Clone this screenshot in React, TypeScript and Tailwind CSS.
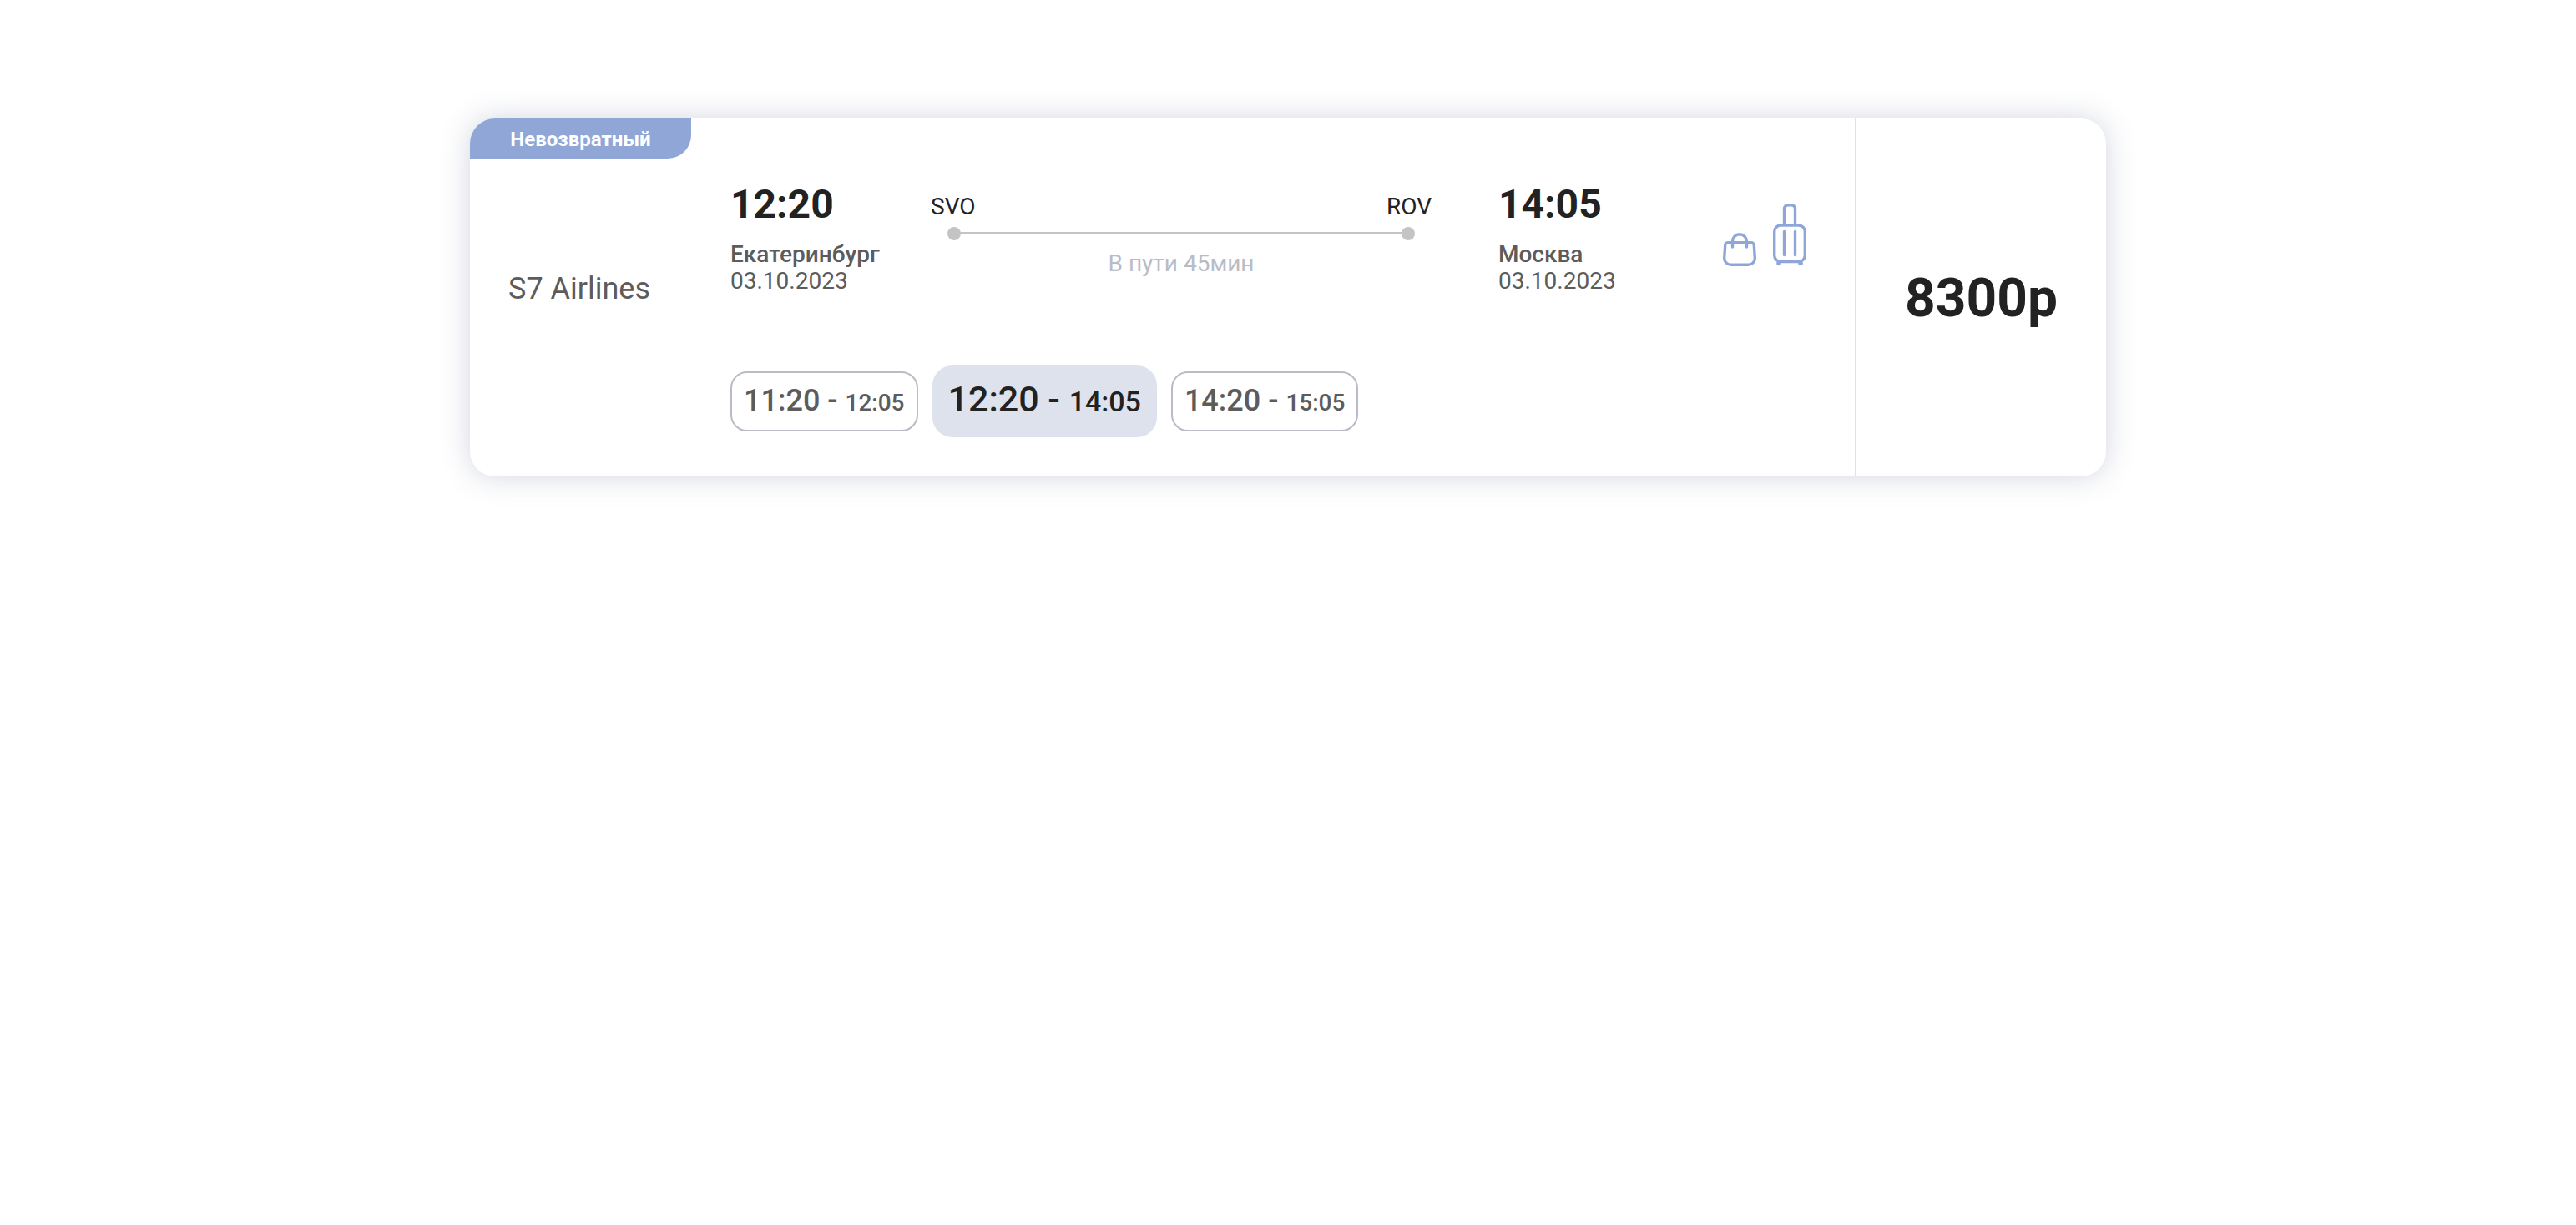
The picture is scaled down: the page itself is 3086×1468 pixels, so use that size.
import React from "react";

type Slot = { from: string; to: string };

const slots: Slot[] = [
  { from: "11:20", to: "12:05" },
  { from: "12:20", to: "14:05" },
  { from: "14:20", to: "15:05" },
];

function Stop({ time, city, date }: { time: string; city: string; date: string }) {
  return (
    <div className="text-[28px] leading-8 text-[#5c5c5c]">
      <div className="mb-5 text-5xl leading-[48px] font-bold text-[#222222]">{time}</div>
      <div className="font-medium">{city}</div>
      <div>{date}</div>
    </div>
  );
}

function Route() {
  return (
    <div className="mt-[11px] flex-1 text-[28px] leading-8">
      <div className="flex justify-between text-[#222222]">
        <span>SVO</span>
        <span>ROV</span>
      </div>
      <div className="mx-5 mt-2 flex items-center">
        <span className="size-4 rounded-full bg-[#c4c4c4]" />
        <span className="-mx-px mb-0.5 h-0.5 flex-1 bg-[#c4c4c4]" />
        <span className="size-4 rounded-full bg-[#c4c4c4]" />
      </div>
      <div className="mt-3 text-center text-[#b9bcc5]">В пути 45мин</div>
    </div>
  );
}

function BagIcon() {
  return (
    <svg width="40" height="40" viewBox="0 0 40 40" fill="none" stroke="#8fa7d8" strokeWidth="3.4" strokeLinecap="round" role="img" aria-label="Ручная кладь">
      <path d="M6 11.7h28a3.3 3.3 0 0 1 3.3 3.2L38.3 30a7.9 7.9 0 0 1-7.9 8.3H9.6A7.9 7.9 0 0 1 1.7 30l1-15.1A3.3 3.3 0 0 1 6 11.7Z" />
      <path d="M11.5 17v-6.8a8.5 8.5 0 0 1 17 0V17" />
    </svg>
  );
}

function SuitcaseIcon() {
  return (
    <svg width="40" height="75" viewBox="0 0 40 75" fill="none" stroke="#8fa7d8" strokeWidth="3.4" strokeLinecap="round" role="img" aria-label="Багаж">
      <rect x="1.7" y="26" width="36.6" height="43.6" rx="7.5" />
      <path d="M13.5 25V6.2a4.5 4.5 0 0 1 4.5-4.5h4a4.5 4.5 0 0 1 4.5 4.5V25M13.5 33.5v28M26.5 33.5v28" />
      <circle cx="7" cy="71.5" r="2.8" fill="#8fa7d8" stroke="none" />
      <circle cx="33" cy="71.5" r="2.8" fill="#8fa7d8" stroke="none" />
    </svg>
  );
}

export default function App() {
  const [selected, setSelected] = React.useState(1);

  return (
    <main className="px-6 pt-[142px] pb-16 font-['Roboto',sans-serif]">
      <article className="mx-auto flex w-full max-w-[1960px] overflow-hidden rounded-[30px] bg-white shadow-[0_0_34px_rgba(80,90,130,0.25)]">
        <div className="w-[312px] shrink-0">
          <div className="w-[265px] rounded-br-[28px] bg-[#8fa6d6] pt-0.5 text-center text-2xl leading-[46px] font-bold text-white">
            Невозвратный
          </div>
          <div className="mt-[136px] pl-[46px] text-4xl leading-10 text-[#5c5c5c]">S7 Airlines</div>
        </div>

        <div className="flex-1 pt-[79px] pb-[47px]">
          <div className="flex">
            <div className="w-60 shrink-0">
              <Stop time="12:20" city="Екатеринбург" date="03.10.2023" />
            </div>
            <Route />
            <div className="ml-20 w-[269px] shrink-0">
              <Stop time="14:05" city="Москва" date="03.10.2023" />
            </div>
            <div className="mt-[23px] mr-[58px] flex items-end gap-5 self-start">
              <BagIcon />
              <SuitcaseIcon />
            </div>
          </div>

          <div className="mt-[85px] flex items-center gap-[17px]">
            {slots.map((slot, i) => (
              <button
                key={slot.from}
                type="button"
                aria-pressed={i === selected}
                onClick={() => setSelected(i)}
                className={
                  i === selected
                    ? "h-[86px] rounded-3xl bg-[#dde2ed] px-[19px] pb-1.5 text-[43px] font-medium text-[#222222]"
                    : "h-[72px] rounded-[20px] border-2 border-[#b9bcc5] px-3.5 pb-0.5 text-4xl font-medium text-[#5c5c5c]"
                }
              >
                {slot.from} - <span className={i === selected ? "text-[34px]" : "text-[28px]"}>{slot.to}</span>
              </button>
            ))}
          </div>
        </div>

        <div className="flex w-[301px] shrink-0 items-center justify-center border-l-2 border-[#dde2ed] pt-0.5 text-[64px] leading-[64px] font-bold text-[#222222]">
          8300р
        </div>
      </article>
    </main>
  );
}
